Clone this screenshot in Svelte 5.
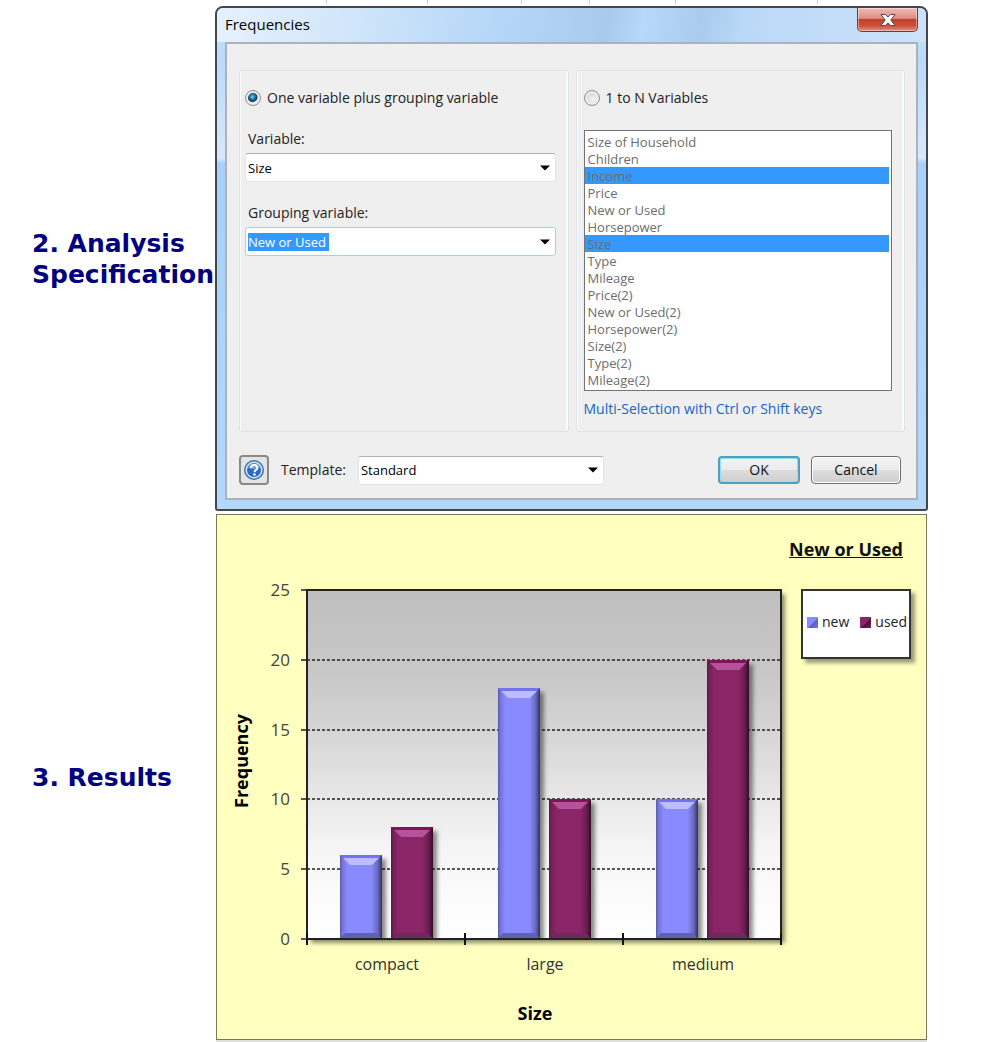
<script lang="ts">
  const fields = ["Size", "New or Used", "Price", "Income"];
  const variables = [
    "Size of Household",
    "Children",
    "Income",
    "Price",
    "New or Used",
    "Horsepower",
    "Size",
    "Type",
    "Mileage",
    "Price(2)",
    "New or Used(2)",
    "Horsepower(2)",
    "Size(2)",
    "Type(2)",
    "Mileage(2)",
  ];

  let mode = $state("grouped");
  let variable = $state("Size");
  let grouping = $state("New or Used");
  let template = $state("Standard");
  const selected = ["Income", "Size"];

  // chart geometry, in viewBox units
  const plot = { x: 90, y: 19, w: 474, h: 349 };
  const max = 25;
  const ticks = [0, 5, 10, 15, 20, 25];
  const barWidth = 42;
  const data = [
    { name: "compact", new: 6, used: 8 },
    { name: "large", new: 18, used: 10 },
    { name: "medium", new: 10, used: 20 },
  ];
  const step = plot.w / data.length;
  const bottom = plot.y + plot.h;

  const yOf = (v: number) => Math.round(bottom - (v / max) * plot.h);

  const bars = data.flatMap((d, i) => [
    { series: "new", x: plot.x + i * step + 33, y: yOf(d.new) },
    { series: "used", x: plot.x + i * step + 84, y: yOf(d.used) },
  ]);
</script>

{#snippet arrow()}
  <svg class="arrow" width="10" height="6" viewBox="0 0 10 6" aria-hidden="true"><path d="M0 0.5h10L5 5.5z" /></svg>
{/snippet}

<div class="sheet" aria-hidden="true">
  <i></i><i></i><i></i><i></i><i></i>
</div>

<main>
  <h2 class="step">2. Analysis Specification</h2>

  <section class="window">
    <header class="titlebar">
      <h1>Frequencies</h1>
      <button class="close" aria-label="Close">
        <svg width="16" height="14" viewBox="0 0 16 14">
          <path d="M1 1.500h4.500L8 4.200l2.500-2.700H15L10.800 7l4.200 5.500h-4.500L8 9.800l-2.500 2.700H1L5.200 7z" fill="#fff" stroke="#5c4a55" stroke-width="1" />
        </svg>
      </button>
    </header>

    <form class="client" onsubmit={(e) => e.preventDefault()}>
      <div class="groups">
        <div class="group">
          <label class="choice">
            <input type="radio" bind:group={mode} value="grouped" />
            One variable plus grouping variable
          </label>
          <div class="fields">
            <div class="field">
              <label for="variable">Variable:</label>
              <div class="combo">
                <select id="variable" bind:value={variable}>
                  {#each fields as f}<option>{f}</option>{/each}
                </select>
                {@render arrow()}
              </div>
            </div>
            <div class="field">
              <label for="grouping">Grouping variable:</label>
              <div class="combo active">
                <select id="grouping" bind:value={grouping}>
                  {#each fields as f}<option>{f}</option>{/each}
                </select>
                {@render arrow()}
              </div>
            </div>
          </div>
        </div>

        <div class="group">
          <label class="choice">
            <input type="radio" bind:group={mode} value="many" />
            1 to N Variables
          </label>
          <select class="list" multiple size="15" disabled aria-label="Variables">
            {#each variables as v}
              <option selected={selected.includes(v)}>{v}</option>
            {/each}
          </select>
          <p class="hint">Multi-Selection with Ctrl or Shift keys</p>
        </div>
      </div>

      <footer>
        <button type="button" class="help" aria-label="Help">
          <svg width="22" height="22" viewBox="0 0 22 22">
            <circle cx="11" cy="11" r="10" fill="#3f74b0" />
            <circle cx="11" cy="11" r="8.500" fill="#d9e8f5" />
            <circle cx="11" cy="11" r="7" fill="#2f68c4" />
            <path d="M5 8.500a6.500 6.500 0 0 1 12 0q-6 3-12 0z" fill="#6fa3e0" />
            <path d="M8 9q0-3 3.200-3t3.200 2.700q0 1.600-1.700 2.500-1.200.7-1.200 2" fill="none" stroke="#fff" stroke-width="2" />
            <circle cx="11.400" cy="15.500" r="1.300" fill="#fff" />
          </svg>
        </button>
        <label for="template">Template:</label>
        <div class="combo template">
          <select id="template" bind:value={template}>
            <option>Standard</option>
          </select>
          {@render arrow()}
        </div>
        <button type="submit" class="btn ok">OK</button>
        <button type="button" class="btn cancel">Cancel</button>
      </footer>
    </form>
  </section>

  <h2 class="step">3. Results</h2>

  <figure class="results">
    <figcaption>New or Used</figcaption>
    <svg class="chart" viewBox="0 0 574 468" role="img" aria-label="Frequency by size">
      <defs>
        <linearGradient id="wall" x1="0" y1="0" x2="0" y2="1">
          <stop offset="0" stop-color="#bfbfbf" />
          <stop offset="0.250" stop-color="#c8c8c8" />
          <stop offset="0.500" stop-color="#dedede" />
          <stop offset="0.750" stop-color="#f6f6f6" />
          <stop offset="1" stop-color="#fff" />
        </linearGradient>
        <linearGradient id="side">
          <stop offset="0" stop-opacity="0.350" />
          <stop offset="0.060" stop-opacity="0.150" />
          <stop offset="0.180" stop-opacity="0" />
          <stop offset="0.750" stop-opacity="0" />
          <stop offset="0.900" stop-opacity="0.250" />
          <stop offset="1" stop-opacity="0.650" />
        </linearGradient>
        <filter id="shadow" x="-20%" y="-10%" width="150%" height="120%">
          <feDropShadow dx="4" dy="4" stdDeviation="2" flood-color="#000" flood-opacity="0.450" />
        </filter>
      </defs>

      <rect x={plot.x} y={plot.y} width={plot.w} height={plot.h} fill="url(#wall)" filter="url(#shadow)" />

      {#each ticks as t}
        {#if t > 0 && t < max}
          <line class="grid" x1={plot.x} x2={plot.x + plot.w} y1={yOf(t)} y2={yOf(t)} />
        {/if}
        <line class="tick" x1={plot.x - 6} x2={plot.x} y1={yOf(t)} y2={yOf(t)} />
        <text class="value" x="73" y={yOf(t) + 6}>{t}</text>
      {/each}

      <clipPath id="inside"><rect x={plot.x} y={plot.y} width={plot.w} height={plot.h} /></clipPath>
      <g clip-path="url(#inside)">
        {#each bars as b}
          <g class={b.series}>
            <rect class="face" x={b.x} y={b.y} width={barWidth} height={bottom - b.y} filter="url(#shadow)" />
            <rect x={b.x} y={b.y} width={barWidth} height={bottom - b.y} fill="url(#side)" />
            <path class="edge" d="M{b.x} {b.y}h{barWidth}l-10 10h-{barWidth - 20}z" />
            <path class="shine" d="M{b.x + 3} {b.y + 3}h{barWidth - 6}l-7 7h-{barWidth - 20}z" />
            <path class="foot" d="M{b.x} {bottom}l5 -6h{barWidth - 10}l5 6z" />
          </g>
        {/each}
      </g>

      <rect class="frame" x={plot.x} y={plot.y} width={plot.w} height={plot.h} />
      {#each [0, 1, 2, 3] as i}
        <line class="mark" x1={plot.x + i * step} x2={plot.x + i * step} y1={bottom - 6} y2={bottom + 6} />
      {/each}
      {#each data as d, i}
        <text class="category" x={plot.x + i * step + step / 2 + 1} y={bottom + 31}>{d.name}</text>
      {/each}

      <text class="axis" x="318" y="449">Size</text>
      <text class="axis" transform="translate(31 190) rotate(-90)">Frequency</text>
    </svg>
    <ul class="legend">
      <li><span class="swatch blue"></span>new</li>
      <li><span class="swatch plum"></span>used</li>
    </ul>
  </figure>
</main>

<style>
  :global(body) {
    background: #fff;
    color: #222;
    font: 13px/18px "Open Sans", "Noto Sans", sans-serif;
  }

  h1,
  h2,
  p,
  figure,
  ul {
    margin: 0;
    padding: 0;
  }

  /* bottom edge of the sheet behind the window */
  .sheet {
    display: grid;
    grid-template-columns: 101fr 94fr 68fr 86fr 142fr;
    height: 4px;
    margin: 0 182px 2px 326px;
    border-left: 1px solid #c5d0de;
  }

  .sheet i {
    border-right: 1px solid #c5d0de;
  }

  main {
    display: grid;
    grid-template-columns: 215px minmax(0, 1fr);
    align-items: center;
    row-gap: 3px;
    padding: 0 72px 3px 0;
  }

  .step {
    padding-left: 32px;
    font: bold 25px/31px "DejaVu Sans", sans-serif;
    color: #000080;
  }

  .window {
    border: 2px solid #41474d;
    border-radius: 8px 8px 3px 3px;
    padding: 0 8px 9px;
    background: linear-gradient(#cfe4f9, #b9dafa 10%, #d8e8f9 30%, #a9d0f8 31%, #b3d8fc);
  }

  .titlebar {
    display: flex;
    justify-content: space-between;
    align-items: flex-start;
    height: 34px;
    margin: 0 -8px;
    padding: 0 8px;
    border-radius: 6px 6px 0 0;
    background: linear-gradient(100deg, #e6f1fc, #d2e6fa 18%, #b4d6f7 40%, #a8cbed 55%, #b6d8f9 60%, #a9cbec 68%, #bad8f7 74%, #cde2f9);
  }

  h1 {
    font: 15px/33px "Open Sans", sans-serif;
    color: #000;
  }

  button {
    font: inherit;
    color: #111;
    padding: 0;
  }

  .close {
    display: grid;
    place-items: center;
    width: 61px;
    height: 24px;
    border: 1px solid #6d3b3b;
    border-top: 0;
    border-radius: 0 0 5px 5px;
    background: linear-gradient(#eebcb5, #df8d80 45%, #c5412c 50%, #c94c37 75%, #e09080);
    box-shadow: inset 0 0 0 1px rgba(255, 255, 255, 0.4);
  }

  .client {
    border: 2px solid #aab3bd;
    padding: 26px 11px 13px 12px;
    background: #efefef;
  }

  .groups {
    display: grid;
    grid-template-columns: 1fr 1fr;
    gap: 7px;
  }

  .group {
    border: 1px solid #dbe4ea;
    border-radius: 3px;
    box-shadow: inset -2px 0 #fbfbfb, inset 1px 0 #fbfbfb;
    padding: 17px 12px 13px 5px;
  }

  .choice,
  .field label,
  .hint,
  footer label,
  .btn {
    font-size: 14px;
  }

  .choice {
    display: flex;
    align-items: center;
    gap: 6px;
    height: 20px;
    margin-bottom: 22px;
  }

  input[type="radio"] {
    appearance: none;
    width: 16px;
    height: 16px;
    margin: 0;
    border: 1px solid #8e9093;
    border-radius: 50%;
    background: radial-gradient(circle at 60% 60%, #f4f4f4, #cfd2d5 70%);
    box-shadow: inset 0 0 0 2px #eee;
  }

  input[type="radio"]:checked {
    background: radial-gradient(circle at 46% 42%, #7fd3f2, #1a6fa0 25%, #143c5c 42%, #dfe2e5 50%);
  }

  .fields {
    display: grid;
    gap: 22px;
  }

  .field {
    display: grid;
    gap: 5px;
  }

  .field label {
    padding-left: 3px;
  }

  .combo {
    display: grid;
    align-items: center;
  }

  .combo > select,
  .combo > :global(.arrow) {
    grid-area: 1 / 1;
  }

  .arrow {
    justify-self: end;
    margin-right: 6px;
    pointer-events: none;
    fill: #000;
  }

  .combo select {
    appearance: none;
    width: 100%;
    height: 29px;
    padding: 0 24px 0 2px;
    border: 1px solid #e1e5ea;
    border-top-color: #abadb3;
    border-radius: 3px;
    background: #fff;
    font: inherit;
    color: #000;
  }

  .combo.active select {
    border-color: #a9cfe8;
    background: linear-gradient(#39f, #39f) 2px center / 81px 18px no-repeat #fff;
    color: #fff;
  }

  .combo.active option {
    color: #000;
  }

  .group + .group {
    padding-left: 7px;
  }

  .list {
    display: block;
    width: 100%;
    height: 261px;
    padding: 2px 2px 2px 0;
    border: 1px solid #6f747c;
    border-radius: 0;
    background: #fff;
    font: inherit;
    opacity: 1;
    overflow: hidden;
  }

  .list option {
    height: 17px;
    min-height: 17px;
    padding: 0 3px;
    line-height: 15px;
    -webkit-text-fill-color: #6d6d6d;
  }

  .list option:checked {
    background: linear-gradient(#39f, #39f);
  }

  .hint {
    margin-top: 9px;
    color: #1565c8;
  }

  footer {
    display: flex;
    align-items: center;
    margin-top: 23px;
  }

  .help {
    display: grid;
    place-items: center;
    width: 30px;
    height: 30px;
    margin-right: 12px;
    border: 2px solid #8a8a8a;
    border-radius: 4px;
    background: #e4e4e4;
  }

  .template {
    flex: 0 1 246px;
    margin: 0 auto 0 12px;
  }

  .btn {
    height: 28px;
    border: 1px solid #707070;
    border-radius: 4px;
    background: linear-gradient(#f3f3f3, #ebebeb 50%, #dcdcdc 52%, #cfcfcf);
    box-shadow: inset 0 0 0 1px #fbfbfb;
  }

  .ok {
    width: 82px;
    margin-right: 11px;
    border: 2px solid #4f9fbf;
    box-shadow: inset 0 0 0 1px #8fe0f8;
  }

  .cancel {
    width: 90px;
    margin-right: 4px;
  }

  .results {
    display: grid;
    grid-template-columns: minmax(0, 1fr) 110px;
    align-items: start;
    column-gap: 10px;
    margin: 0 1px;
    padding-right: 15px;
    border: 1px solid #77775a;
    background: #ffffc0;
    box-shadow: 0 3px #dedede;
  }

  figcaption {
    grid-column: 1 / -1;
    padding: 22px 8px 10px 0;
    font-size: 18px;
    font-weight: bold;
    line-height: 24px;
    text-align: right;
    text-decoration: underline;
    color: #111;
  }

  .chart {
    display: block;
    width: 100%;
  }

  .grid {
    stroke: #222;
    stroke-width: 1.5;
    stroke-dasharray: 3 2;
  }

  .tick {
    stroke: #555;
    stroke-width: 2;
  }

  .frame {
    fill: none;
    stroke: #222;
    stroke-width: 2;
  }

  .mark {
    stroke: #111;
    stroke-width: 2;
  }

  .value {
    font-size: 17px;
    text-anchor: end;
    fill: #444;
  }

  .category {
    font-size: 16px;
    text-anchor: middle;
    fill: #333;
  }

  .axis {
    font-size: 18px;
    font-weight: bold;
    text-anchor: middle;
    fill: #000;
  }

  .new .face {
    fill: #8a8aff;
  }

  .new .edge {
    fill: #7373ee;
  }

  .new .shine {
    fill: #bcbcff;
  }

  .new .foot {
    fill: #6060b4;
  }

  .used .face {
    fill: #8a2567;
  }

  .used .edge {
    fill: #7c1657;
  }

  .used .shine {
    fill: #b5529a;
  }

  .used .foot {
    fill: #6e2a5c;
  }

  .legend {
    display: flex;
    justify-content: space-between;
    align-items: center;
    height: 62px;
    margin-top: 18px;
    padding: 0 2px 4px 4px;
    border: 2px solid #333;
    background: #fff;
    box-shadow: 4px 4px 4px rgba(0, 0, 0, 0.4);
    list-style: none;
    font-size: 14px;
  }

  .legend li {
    display: flex;
    align-items: center;
    gap: 4px;
  }

  .swatch {
    width: 11px;
    height: 11px;
  }

  .blue {
    background: linear-gradient(135deg, #8a8aff 50%, #5c5cba 60%, #7a7ae0);
  }

  .plum {
    background: linear-gradient(135deg, #8a2567 50%, #4a1038 60%, #7a205a);
  }
</style>
